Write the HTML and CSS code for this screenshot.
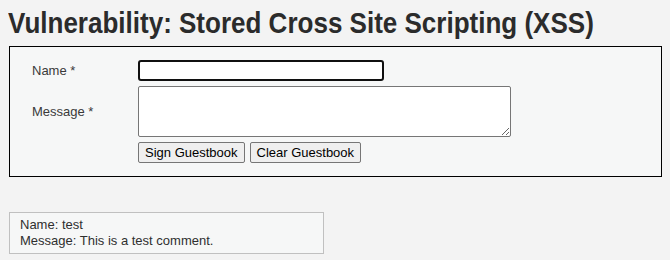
FILE: index.html
```
<!DOCTYPE html>
<html lang="en">
<head>
    <link rel="stylesheet" href="styles.css">
    <meta charset="utf-8" />
    <title>Vulnerability: Stored Cross Site Scripting (XSS)</title>
</head>
<body>

<div class="body_padded">
    <h1><span>Vulnerability: Stored Cross Site Scripting (XSS)</span></h1>

    <!-- guestbook form -->
    <div class="vulnerable_code_area">
        <form class="guestform" name="guestform" method="post">
            <label for="txtName">Name *</label>
            <input type="text" id="txtName" name="txtName" class="focused" maxlength="10" autofocus>

            <label for="mtxMessage">Message *</label>
            <textarea id="mtxMessage" name="mtxMessage" cols="50" rows="3" maxlength="50"></textarea>

            <div class="buttons">
                <input type="submit" name="btnSign" value="Sign Guestbook">
                <input type="submit" name="btnClear" value="Clear Guestbook">
            </div>
        </form>
    </div>

    <!-- stored comments -->
    <div id="guestbook_comments">Name: test<br />Message: This is a test comment.<br /></div>
</div>

</body>
</html>
```
FILE: styles.css
```
html, body {
    margin: 0;
    background: #f3f3f3;
    font-family: "Liberation Sans", Arial, sans-serif;
    color: #2f2f2f;
}

.body_padded {
    padding: 0 8px;
}

h1 {
    margin: 0;
    padding-top: 5px;
    height: 41px;
    font-family: "Liberation Sans", Arial, sans-serif;
    font-size: 30px;
    font-weight: bold;
    line-height: 36px;
    color: #2b2b2b;
    white-space: nowrap;
}

/* the original uses a narrow face, squeeze the regular one */
h1 span {
    display: inline-block;
    transform: scaleX(0.867);
    transform-origin: left center;
}

.vulnerable_code_area {
    box-sizing: border-box;
    width: 653px;
    margin-left: 1px;
    padding: 13px 22px 13px 22px;
    border: 1px solid #000;
    background: #f6f7f7;
}

.guestform {
    display: grid;
    grid-template-columns: 106px auto;
    row-gap: 5px;
    align-items: center;
    justify-items: start;
    font-size: 13px;
}

.guestform label {
    color: #3a3a3a;
}

#txtName {
    box-sizing: border-box;
    width: 246px;
    height: 21px;
    margin: 0;
    padding: 0 2px;
    border: 2px solid #101010;
    border-radius: 3px;
    outline: none;
    background: #fff;
}

textarea {
    box-sizing: border-box;
    width: 373px;
    height: 51px;
    margin: 0;
    border: 1px solid #767676;
    border-radius: 2px;
    background: #fff;
}

.buttons {
    grid-column: 2;
    display: flex;
    gap: 5px;
}

.buttons input {
    height: 21px;
    margin: 0;
    padding: 0 6px;
    font-family: "Liberation Sans", Arial, sans-serif;
    font-size: 13px;
    color: #000;
    background: #efefef;
    border: 1px solid #767676;
    border-radius: 2px;
}

#guestbook_comments {
    box-sizing: border-box;
    width: 315px;
    margin: 35px 0 0 1px;
    padding: 4px 10px;
    border: 1px solid #c0c0c0;
    background: #f6f7f7;
    font-size: 13px;
    line-height: 16px;
    color: #2f2f2f;
}
```
